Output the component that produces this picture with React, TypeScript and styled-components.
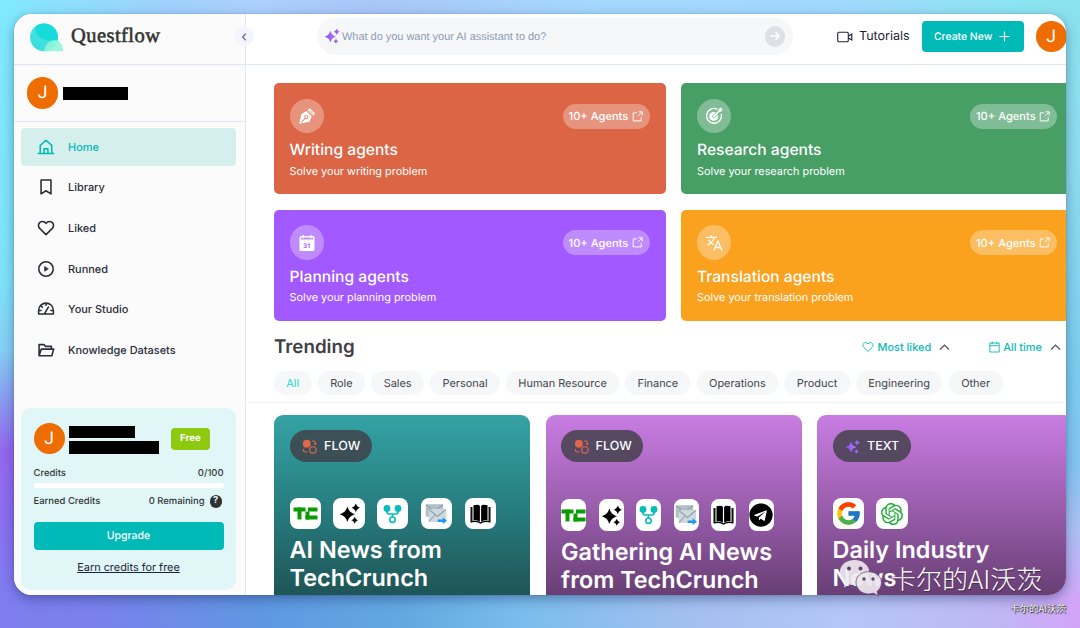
import React from "react";
import styled, { createGlobalStyle } from "styled-components";
import { FcGoogle } from "react-icons/fc";
import { SiOpenai } from "react-icons/si";
import { FaTelegram } from "react-icons/fa";

const Global = createGlobalStyle`
  * { box-sizing: border-box; }
  body {
    margin: 0;
    font-family: Inter, "Liberation Sans", sans-serif;
    font-optical-sizing: none;
    text-rendering: geometricPrecision;
    overflow: hidden;
  }
  button { text-rendering: inherit; font-optical-sizing: none; }
  svg { display: block; flex: none; }
`;

const Desktop = styled.div`
  position: relative;
  width: 1080px;
  height: 628px;
  padding: 14px;
  overflow: hidden;
  background:
    linear-gradient(90deg, #80e9fd 0, #a0d0fd 170px, #acd0fd 250px, #a9c6f8 370px, #a3d9fd 600px, #a2d8fd 830px, #8ce4f2 1010px, #8ae2ee 1080px) 0 0 / 100% 14px no-repeat,
    linear-gradient(90deg, #7f7df0 0, #7a80ec 90px, #5f97e2 260px, #62a8e0 400px, #79bdec 520px, #a3bff0 690px, #b4c6f5 850px, #c0b6f4 1000px, #d3a3f8 1080px) 0 594px / 100% 34px no-repeat,
    linear-gradient(180deg, #80e9fd 0, #80e2f9 280px, #85cff5 350px, #8a9cf0 400px, #9468ee 450px, #8d6df0 510px, #7f7df0 594px) 0 0 / 40px 594px no-repeat,
    linear-gradient(180deg, #8ae2ee 0, #8fdcee 160px, #7ccbee 380px, #86c4f0 470px, #adc0f5 530px, #cdaaf7 594px) 100% 0 / 40px 594px no-repeat,
    #7dbce9;
`;

const Window = styled.div`
  display: grid;
  grid-template-columns: 232px 1fr;
  width: 1052px;
  height: 580.6px;
  overflow: hidden;
  border-radius: 18px;
  background: #fff;
`;

const WindowShadow = styled.div`
  width: 1052px;
  border-radius: 18px;
  box-shadow: 0 0 1px rgba(0, 30, 60, 0.5), 0 4px 12px rgba(10, 30, 80, 0.38);
`;

const Sidebar = styled.aside`
  position: relative;
  display: flex;
  flex-direction: column;
  min-height: 0;
  background: #fbfbfb;
  border-right: 1px solid #e5e6f5;
`;

const Brand = styled.div`
  display: flex;
  align-items: center;
  height: 51px;
  padding: 0 0 4px 16px;
  border-bottom: 1px solid #e0e5f6;
`;

const BrandName = styled.span`
  margin: -1px 0 0 8px;
  font: 500 20.5px "Liberation Serif", serif;
  letter-spacing: 0.45px;
  color: #333;
  -webkit-text-stroke: 0.55px #333;
`;

const Collapse = styled.div`
  position: absolute;
  z-index: 2;
  top: 13px;
  right: -9px;
  display: grid;
  place-items: center;
  width: 19px;
  height: 19px;
  border-radius: 50%;
  background: #f4f5fc;
`;

const UserRow = styled.div`
  display: flex;
  align-items: center;
  gap: 5px;
  height: 57px;
  padding: 0 0 0 13px;
  border-bottom: 1px solid #e5e6f2;
`;

const Avatar = styled.div`
  display: grid;
  place-items: center;
  flex: none;
  width: 31.4px;
  height: 31.4px;
  padding-top: 1px;
  border-radius: 50%;
  background: #ef6c00;
  color: #fff;
  font: 400 17.5px Roboto, sans-serif;
`;

const Redacted = styled.div<{ $w: number; $h: number }>`
  width: ${(p) => p.$w}px;
  height: ${(p) => p.$h}px;
  background: #000;
`;

const Nav = styled.nav`
  display: flex;
  flex-direction: column;
  gap: 3.1px;
  padding: 6px 9px 0 7px;
`;

const NavItem = styled.a<{ $active?: boolean }>`
  display: flex;
  align-items: center;
  gap: 13px;
  height: 37.5px;
  padding-left: 16px;
  border-radius: 4px;
  font-size: 10.95px;
  font-weight: 500;
  color: ${(p) => (p.$active ? "#06b9b7" : "#2b2d38")};
  background: ${(p) => (p.$active ? "#d5efed" : "transparent")};
`;

const Plan = styled.section`
  display: flex;
  flex-direction: column;
  width: 215px;
  height: 182px;
  margin: auto 0 5px 7px;
  padding: 15px 12.5px 0;
  border-radius: 10px;
  background: #e1f6f7;
`;

const PlanUser = styled.div`
  display: flex;
  align-items: center;
  height: 32px;
`;

const Redactions = styled.div`
  display: flex;
  flex-direction: column;
  gap: 3px;
  width: 102px;
  padding: 3px 0 0 4px;
`;

const FreeTag = styled.span`
  width: 39px;
  margin-left: 4px;
  border-radius: 4px;
  background: #8cc90f;
  color: #fff;
  font-size: 9.6px;
  font-weight: 700;
  line-height: 22px;
  text-align: center;
`;

const PlanLine = styled.div<{ $top: number }>`
  display: flex;
  align-items: center;
  justify-content: space-between;
  height: 13px;
  margin-top: ${(p) => p.$top}px;
  font-size: 9.45px;
  font-weight: 500;
  color: #33373a;
`;

const Remaining = styled.span`
  display: flex;
  align-items: center;
  gap: 5px;
  padding-right: 1.5px;
`;

const Help = styled.span`
  width: 12.5px;
  border-radius: 50%;
  background: #2f3030;
  color: #e1f6f7;
  font-size: 9.5px;
  font-weight: 700;
  line-height: 12.5px;
  text-align: center;
`;

const Meter = styled.div`
  height: 4.5px;
  margin-top: 3px;
  border-radius: 3px;
  background: #fff;
`;

const Upgrade = styled.button`
  height: 28px;
  margin-top: 13.5px;
  padding: 0;
  border: 0;
  border-radius: 4px;
  background: #00bab7;
  color: #fff;
  font: 500 10.5px Inter, sans-serif;
`;

const EarnLink = styled.a`
  margin-top: 10px;
  color: #1b2437;
  font-size: 10.9px;
  line-height: 14px;
  text-align: center;
  text-decoration: underline;
`;

const Main = styled.main`
  min-width: 0;
  overflow: hidden;
`;

const TopBar = styled.header`
  display: flex;
  align-items: center;
  width: 840px;
  height: 51px;
  padding: 0 0 5.5px 71px;
  border-bottom: 1px solid #e0e7f8;
`;

const Search = styled.div`
  display: flex;
  align-items: center;
  width: 476px;
  height: 37.5px;
  padding: 0 8px 0 6.5px;
  border-radius: 19px;
  background: #f6f7f9;
`;

const Placeholder = styled.span`
  flex: 1;
  margin: 1px 0 0 2.5px;
  font-family: "Liberation Sans", sans-serif;
  font-size: 10.95px;
  color: #8b9cb3;
`;

const Go = styled.span`
  display: grid;
  place-items: center;
  width: 20.5px;
  height: 20.5px;
  border-radius: 50%;
  background: #dfe0e7;
`;

const Tutorials = styled.a`
  display: flex;
  align-items: center;
  gap: 6px;
  width: 85px;
  margin-left: 44px;
  padding-top: 1px;
  font-size: 12.5px;
  color: #1f2136;
`;

const Create = styled.button`
  display: flex;
  align-items: center;
  justify-content: space-between;
  width: 101.5px;
  height: 31.5px;
  margin-right: 12px;
  padding: 0 13.5px 0 12px;
  border: 0;
  border-radius: 4px;
  background: #00bab7;
  color: #fff;
  font: 500 10.4px Inter, sans-serif;
`;

const AgentGrid = styled.section`
  display: grid;
  grid-template-columns: 391.6px 391.6px;
  grid-auto-rows: 110.7px;
  gap: 15.8px;
  width: 799px;
  margin: 18.4px 0 0 28px;
`;

const AgentCard = styled.article<{ $color: string }>`
  display: flex;
  flex-direction: column;
  padding: 15.5px 15.6px 0;
  border-radius: 5px;
  background: ${(p) => p.$color};
  color: #fff;
`;

const AgentTop = styled.div`
  display: flex;
  align-items: center;
  justify-content: space-between;
`;

const AgentIcon = styled.div`
  display: grid;
  place-items: center;
  width: 34.4px;
  height: 34.4px;
  border-radius: 50%;
  background: rgba(255, 255, 255, 0.31);
`;

const AgentCount = styled.div`
  display: flex;
  align-items: center;
  justify-content: space-between;
  width: 87.4px;
  height: 25px;
  padding: 0 7.5px 0 6px;
  border-radius: 13px;
  background: rgba(255, 255, 255, 0.31);
  font-size: 11.1px;
  font-weight: 500;
`;

const AgentTitle = styled.h3`
  margin: 7px 0 0;
  font-size: 15.6px;
  font-weight: 500;
  line-height: 20px;
`;

const AgentText = styled.p`
  margin: 3.5px 0 0;
  font-size: 10.87px;
  line-height: 14px;
`;

const TrendHead = styled.div`
  display: flex;
  align-items: center;
  height: 30px;
  margin: 11.3px 0 0 28px;
`;

const TrendTitle = styled.h2`
  width: 588px;
  margin: 0;
  font-size: 18.75px;
  font-weight: 600;
  color: #3f4046;
`;

const Filter = styled.div<{ $gap: number }>`
  display: flex;
  align-items: center;
  gap: 3.5px;
  margin-right: ${(p) => p.$gap}px;
  font-size: 10.95px;
  font-weight: 500;
  color: #0cbab8;
  white-space: nowrap;
`;

const Chevron = styled.svg`
  margin-left: 4px;
`;

const Chips = styled.div`
  display: flex;
  gap: 6.3px;
  height: 41px;
  padding: 9px 0 0 28px;
  border-bottom: 1px solid #eeeff1;
`;

const Chip = styled.span<{ $w: number; $active?: boolean }>`
  flex: none;
  width: ${(p) => p.$w}px;
  height: 24.4px;
  border-radius: 12.5px;
  background: #f6f7f9;
  color: ${(p) => (p.$active ? "#14dcd2" : "#42444a")};
  font-size: 10.95px;
  line-height: 24.4px;
  text-align: center;
`;

const Trends = styled.section`
  display: grid;
  grid-template-columns: repeat(3, 256px);
  gap: 15.5px;
  width: 799px;
  margin: 12px 0 0 28px;
`;

const TrendCard = styled.article<{ $from: string; $mid: string; $to: string }>`
  display: flex;
  flex-direction: column;
  height: 260px;
  padding: 15.5px 15.6px 0;
  border-radius: 9px;
  background: linear-gradient(180deg, ${(p) => p.$from} 0, ${(p) => p.$mid} 90px, ${(p) => p.$to} 180px);
  color: #fff;
`;

const Kind = styled.div<{ $w: number }>`
  display: flex;
  align-items: center;
  gap: 7px;
  width: ${(p) => p.$w}px;
  height: 31.3px;
  padding-left: 12.5px;
  border-radius: 16px;
  background: rgba(64, 64, 72, 0.82);
  font-size: 12.5px;
  font-weight: 500;
`;

const Tools = styled.div<{ $top: number }>`
  display: flex;
  gap: 12.5px;
  margin-top: ${(p) => p.$top}px;
`;

const Tool = styled.div<{ $w: number }>`
  display: grid;
  place-items: center;
  width: ${(p) => p.$w}px;
  height: 31.3px;
  border-radius: 8px;
  background: #fff;
`;

const TrendName = styled.h3`
  margin: 7px -8px 0 0;
  font-size: 23.4px;
  font-weight: 600;
  line-height: 28px;
`;

const Watermark = styled.div`
  position: absolute;
  z-index: 3;
  left: 839px;
  top: 558px;
  display: flex;
  align-items: center;
  gap: 8px;
  height: 40px;
  color: #fff;
  font: 300 26px "Noto Sans CJK SC", sans-serif;
  text-shadow: 0.5px 0.5px 1px rgba(0, 0, 0, 0.45);
  white-space: nowrap;
`;

const Signature = styled.div`
  position: absolute;
  right: 14px;
  top: 601px;
  color: #fff;
  font: 400 9.5px/14px "Noto Sans CJK SC", sans-serif;
  text-shadow: 1px 1px 1px #222, 0 0 1px #333;
`;

const Line = ({ children, s = 20 }: { children: React.ReactNode; s?: number }) => (
  <svg width={s} height={s} viewBox="0 0 20 20" fill="none" stroke="currentColor" strokeWidth="1.75" strokeLinejoin="round" strokeLinecap="round">
    {children}
  </svg>
);

const Logo = () => (
  <svg width="33" height="29" viewBox="0 0 33 29">
    <defs>
      <linearGradient id="lg" x1="0" y1="1" x2="1" y2="0">
        <stop offset="0" stopColor="#37dce0" />
        <stop offset="1" stopColor="#4de8da" />
      </linearGradient>
      <clipPath id="lc"><circle cx="14" cy="14.3" r="13.9" /></clipPath>
    </defs>
    <circle cx="14" cy="14.3" r="13.9" fill="url(#lg)" />
    <path d="M6 -1H30V17.5H19C11 17.5 5 12 5.500 5Z" fill="#17dbdb" clipPath="url(#lc)" />
    <path d="M14 28.300C15 21 20 17.300 25 17.300C30 17.300 33 22 33 28.300Z" fill="#8ff5dc" opacity=".9" />
  </svg>
);

const Sparkles = ({ s = 16, fill = "url(#spark)" }: { s?: number; fill?: string }) => (
  <svg width={s} height={s} viewBox="0 0 20 20">
    <defs>
      <linearGradient id="spark" x1="0" y1="0" x2="1" y2="0">
        <stop offset="0" stopColor="#7d52f4" />
        <stop offset="1" stopColor="#b57bf5" />
      </linearGradient>
    </defs>
    <g fill={fill}>
      <path d="M8 3.300C9.500 7.700 11 9.200 15.300 10.700C11 12.200 9.500 13.700 8 18.100C6.500 13.700 5 12.200 0.500 10.700C5 9.200 6.500 7.700 8 3.300Z" />
      <path d="M16 0.500C16.900 2.900 17.700 3.700 20 4.600C17.700 5.500 16.900 6.300 16 8.700C15.100 6.300 14.300 5.500 12 4.600C14.300 3.700 15.100 2.900 16 0.500Z" />
      <path d="M15 13.200C15.700 15.100 16.400 15.800 18.300 16.500C16.400 17.200 15.700 17.900 15 19.800C14.300 17.900 13.600 17.200 11.700 16.500C13.600 15.800 14.300 15.100 15 13.200Z" />
    </g>
  </svg>
);

const navItems: [string, React.ReactNode][] = [
  ["Home", <path d="M1.500 17.300H18.500M3.600 17V8.200L10 2.500L16.400 8.200V17M7.900 17V12H12.100V17" />],
  ["Library", <path d="M4.500 2.300H15.500V17.700L10 14.200L4.500 17.700Z" />],
  ["Liked", <path d="M10 17.300L3.200 10.700C0 7.300 2.200 2.700 6 2.700C8 2.700 9.300 3.700 10 5C10.700 3.700 12 2.700 14 2.700C17.800 2.700 20 7.300 16.800 10.700Z" />],
  ["Runned", <><circle cx="10" cy="10" r="8" /><path d="M8.500 7.600V12.400L12.300 10Z" fill="currentColor" strokeWidth=".8" /></>],
  ["Your Studio", <path d="M1.800 15.600V12C1.800 0.600 18.200 0.600 18.200 12V15.600ZM8.300 15.300L12.600 7.800M10 3.800V5.800M4.800 6.800L6 8M2.500 11.700H4.500M15.500 11.700H17.500" />],
  ["Knowledge Datasets", <path d="M2.300 16.300V4H7.800L9.500 6H16V8.800M2.300 16.300L4.800 9H18.500L16.500 16.300Z" />],
];

const external = (
  <svg width="11" height="11" viewBox="0 0 11 11" fill="none" stroke="#fff" strokeWidth=".95">
    <path d="M5 1.900H1.200V9.900H9.200V6.200M6.600 .8H10.200V4.400M10 1L5.700 5.300" />
  </svg>
);

const pen = (
  <svg width="18" height="18" viewBox="0 0 18 18" fill="#fff">
    <path fillRule="evenodd" d="M1.300 16.700L3.200 7.200L8.500 4.100L13.700 9.400L11.300 14.700ZM2.800 14.900L6.500 11.200A2.100 2.100 0 1 1 7.400 12L3.600 15.700Z" />
    <circle cx="8.200" cy="10" r="1" />
    <path d="M9.600 3.300L11.800 1.200L17 6.500L14.800 8.600ZM11.300 3.400L14.700 7L15.300 6.400L11.900 2.900Z" fillRule="evenodd" />
  </svg>
);

const target = (
  <svg width="18" height="18" viewBox="0 0 18 18" fill="none" stroke="#fff">
    <path strokeWidth="1.400" d="M12.500 2.300A7.400 7.400 0 1 0 16.200 7" />
    <circle cx="8.700" cy="9.400" r="4.500" fill="#fff" stroke="none" />
    <path stroke="#83bc96" strokeWidth="1" d="M7.600 9.100L12.700 4M9.600 10.600L14.200 6M7.400 9.200Q7.600 10.900 9.400 10.800" />
    <path strokeWidth="1.400" d="M8.800 9.500L15 3.300" />
    <path strokeWidth=".8" d="M14 4V2.200L16.400 .9V2.700L17.300 3L15.500 4.500Z" fill="#fff" />
  </svg>
);

const CalendarSvg = styled.svg`
  font: 700 6.6px Roboto, sans-serif;
`;

const calendar = (
  <CalendarSvg width="18" height="18" viewBox="0 0 18 18" fill="#fff">
    <path fillRule="evenodd" d="M3 2H4.500V1H5.900V2H12.100V1H13.500V2H15Q16.500 2 16.500 3.500V15.500Q16.500 17 15 17H3Q1.500 17 1.500 15.500V3.500Q1.500 2 3 2ZM3 3.400V5.500H15V3.400H13.500V4.300H12.100V3.400H5.900V4.300H4.500V3.400Z" />
    <text x="9" y="13.700" textAnchor="middle" fill="#a259ff">31</text>
  </CalendarSvg>
);

const translate = (
  <svg width="18" height="18" viewBox="0 0 18 18" fill="none" stroke="#fff" strokeWidth="1.300">
    <path d="M1 3.300H11.700M6.300 1.300V3.300M2.300 11.200C6.500 9 8.700 6 9 3.500M3.500 5.700C4.700 8 6.400 9.500 8.500 10.600M8.800 16.500L12.900 7.200L17 16.500M10.300 13.500H15.500" />
  </svg>
);

const agents = [
  { name: "Writing agents", text: "Solve your writing problem", color: "#dc6545", icon: pen },
  { name: "Research agents", text: "Solve your research problem", color: "#479f66", icon: target },
  { name: "Planning agents", text: "Solve your planning problem", color: "#a259ff", icon: calendar },
  { name: "Translation agents", text: "Solve your translation problem", color: "#faa11d", icon: translate },
];

const chips: [string, number][] = [
  ["All", 37.5], ["Role", 47.2], ["Sales", 52.7], ["Personal", 69.6], ["Human Resource", 112.8],
  ["Finance", 65.2], ["Operations", 81.3], ["Product", 65.4], ["Engineering", 86.3], ["Other", 54],
];

const UpChevron = () => (
  <Chevron width="11" height="8" viewBox="0 0 11 8" fill="none" stroke="#4c4e57" strokeWidth="1.100">
    <path d="M1 6.500L5.500 2L10 6.500" />
  </Chevron>
);

const flowIcon = (
  <svg width="15" height="15" viewBox="0 0 15 15" fill="none" stroke="#e0684a" strokeWidth="1.100">
    <circle cx="4.800" cy="4.700" r="3.900" fill="#e0684a" stroke="none" />
    <circle cx="10.900" cy="10.900" r="3.200" />
    <path d="M9.800 2H11.500Q13.300 2 13.300 3.800V5.500M1.500 10V11.300Q1.500 13 3.200 13H5.500M12.300 4.500L13.300 5.600L14.300 4.500" />
  </svg>
);

const techcrunch = (
  <svg width="25" height="13" viewBox="0 0 25 13" fill="#0a9b05">
    <rect x=".5" y=".5" width="12" height="4" /><rect x="4.500" y=".5" width="4" height="12" />
    <rect x="16.500" y=".5" width="8" height="4" /><rect x="12.500" y="4.500" width="4" height="8" />
    <rect x="12.500" y="8.500" width="12" height="4" /><rect x="15" y=".5" width="2" height="4" />
  </svg>
);

const fork = (
  <svg width="19" height="20" viewBox="0 0 19 20" fill="none" stroke="#05bdb9" strokeWidth="1.600">
    <circle cx="4" cy="4.400" r="3.400" fill="#05bdb9" stroke="none" />
    <circle cx="15" cy="4.400" r="3.400" fill="#05bdb9" stroke="none" />
    <path d="M4 6V8Q4 10 6 10H13Q15 10 15 8V6M9.500 10V13" />
    <circle cx="9.500" cy="15.700" r="2.700" />
  </svg>
);

const mail = (
  <svg width="23" height="22" viewBox="0 0 23 22">
    <rect x=".7" y="1.200" width="17.500" height="12.500" rx="1" fill="#b1bfc7" />
    <path d="M1 1.700L9.500 8L18 1.700" stroke="#859aa5" fill="none" />
    <rect x="3.600" y="6" width="17.600" height="13" rx="1" fill="#cfd8dd" />
    <path d="M4 6.500L12.400 13.500L20.800 6.500M4 18.500L9.800 12" stroke="#8fa3ae" strokeWidth="1.100" fill="none" />
    <path d="M12.700 16.400H17.700V14.300L22 17.700L17.700 21V19H12.700Z" fill="#2196f3" />
  </svg>
);

const book = (
  <svg width="21" height="20" viewBox="0 0 21 20">
    <path d="M3.500 1.300Q8.500 -.3 9.900 2V17.800Q7.500 15.500 3.500 16.500ZM17.500 1.300Q12.500 -.3 11.100 2V17.800Q13.500 15.500 17.500 16.500Z" fill="#000" />
    <path d="M1.800 3V17.700Q7.500 16.500 10.500 19Q13.500 16.500 19.200 17.700V3" fill="none" stroke="#000" strokeWidth="1.300" />
    <path d="M.5 3H1.500V18.500H.5ZM19.500 3H20.500V18.500H19.500Z" fill="#000" />
  </svg>
);

const wechat = (
  <svg width="43" height="40" viewBox="0 0 43 40">
    <path d="M15.500 2C7 2 .8 7.300.8 14.500C.8 18.700 3 22 6.200 24.300L5 29.500L10.300 26.600C12 27.100 13.800 27.300 15.500 27.300C24 27.300 30.300 21.500 30.300 14.500S24 2 15.500 2Z" fill="#eeeaf0" opacity=".9" />
    <path d="M29.500 13.700C22.300 13.700 17 18.500 17 24.500S22.300 36 29.500 36C31.200 36 33 35.700 34.500 35.200L39.500 38L38 33.600C40.900 31.500 42.500 28.300 42.500 24.500C42.500 18.500 36.700 13.700 29.500 13.700Z" fill="#ebe7ed" stroke="#65436e" strokeWidth=".8" opacity=".92" />
    <g fill="#63446e">
      <circle cx="10" cy="10.500" r="2" /><circle cx="21.500" cy="10.500" r="2" />
      <circle cx="25" cy="21" r="1.700" /><circle cx="34" cy="21" r="1.700" />
    </g>
  </svg>
);

const base = [techcrunch, <Sparkles s={21} fill="#000" />, fork, mail, book];
const trends = [
  { kind: "FLOW", w: 82, title: ["AI News from", "TechCrunch"], tile: 31.3, top: 36.3, colors: ["#35a3a5", "#277e80", "#1f5557"], tools: base },
  { kind: "FLOW", w: 82, title: ["Gathering AI News", "from TechCrunch"], tile: 25, top: 37.8, colors: ["#c87de2", "#9b5eae", "#683f75"], tools: [...base, <FaTelegram size={24} color="#000" />] },
  { kind: "TEXT", w: 78.5, title: ["Daily Industry", "News"], tile: 31.3, top: 36.3, colors: ["#c87de2", "#9b5eae", "#683f75"], tools: [<FcGoogle size={27} />, <SiOpenai size={22} color="#20ac39" />] },
];

export default function App() {
  return (
    <Desktop>
      <Global />
      <WindowShadow>
        <Window>
          <Sidebar>
            <Collapse>
              <svg width="9" height="10" viewBox="0 0 9 10" fill="none" stroke="#6a70a8" strokeWidth="1.300"><path d="M5.800 1.800L2.600 5L5.800 8.200" /></svg>
            </Collapse>
            <Brand><Logo /><BrandName>Questflow</BrandName></Brand>
            <UserRow><Avatar>J</Avatar><Redacted $w={65} $h={13} /></UserRow>
            <Nav>
              {navItems.map(([label, icon], i) => (
                <NavItem key={label} $active={i === 0}><Line s={18}>{icon}</Line>{label}</NavItem>
              ))}
            </Nav>
            <Plan>
              <PlanUser>
                <Avatar>J</Avatar>
                <Redactions><Redacted $w={66} $h={12.500} /><Redacted $w={90} $h={13} /></Redactions>
                <FreeTag>Free</FreeTag>
              </PlanUser>
              <PlanLine $top={12.500}><span>Credits</span><span>0/100</span></PlanLine>
              <Meter />
              <PlanLine $top={7.500}><span>Earned Credits</span><Remaining>0 Remaining<Help>?</Help></Remaining></PlanLine>
              <Upgrade>Upgrade</Upgrade>
              <EarnLink>Earn credits for free</EarnLink>
            </Plan>
          </Sidebar>
          <Main>
            <TopBar>
              <Search>
                <Sparkles s={16} />
                <Placeholder>What do you want your AI assistant to do?</Placeholder>
                <Go><svg width="12" height="12" viewBox="0 0 12 12" fill="none" stroke="#fff" strokeWidth="1.500"><path d="M1.500 6H10M6.500 2.300L10.200 6L6.500 9.700" /></svg></Go>
              </Search>
              <Tutorials>
                <svg width="16" height="12" viewBox="0 0 16 12" fill="none" stroke="currentColor" strokeWidth="1.100"><rect x=".7" y="1.200" width="10.600" height="9.500" rx="1.300" /><path d="M11.500 5L14.800 3V9L11.500 7" /></svg>
                Tutorials
              </Tutorials>
              <Create>Create New<svg width="11" height="11" viewBox="0 0 11 11" stroke="#fff" strokeWidth="1.200"><path d="M5.500 .5V10.500M.5 5.500H10.500" /></svg></Create>
              <Avatar>J</Avatar>
            </TopBar>
            <AgentGrid>
              {agents.map((a) => (
                <AgentCard key={a.name} $color={a.color}>
                  <AgentTop><AgentIcon>{a.icon}</AgentIcon><AgentCount>10+ Agents{external}</AgentCount></AgentTop>
                  <AgentTitle>{a.name}</AgentTitle>
                  <AgentText>{a.text}</AgentText>
                </AgentCard>
              ))}
            </AgentGrid>
            <TrendHead>
              <TrendTitle>Trending</TrendTitle>
              <Filter $gap={39}>
                <svg width="12" height="12" viewBox="0 0 20 20" fill="none" stroke="currentColor" strokeWidth="1.500">{navItems[2][1]}</svg>
                Most liked<UpChevron />
              </Filter>
              <Filter $gap={0}>
                <svg width="11" height="12" viewBox="0 0 11 12" fill="none" stroke="currentColor" strokeWidth=".9"><path d="M.8 2H10.200V11H.8ZM.8 4.700H10.200M3.300 .7V3M7.700 .7V3" /></svg>
                All time<UpChevron />
              </Filter>
            </TrendHead>
            <Chips>
              {chips.map(([label, w], i) => <Chip key={label} $w={w} $active={i === 0}>{label}</Chip>)}
            </Chips>
            <Trends>
              {trends.map((t) => (
                <TrendCard key={t.title[0]} $from={t.colors[0]} $mid={t.colors[1]} $to={t.colors[2]}>
                  <Kind $w={t.w}>{t.kind === "FLOW" ? flowIcon : <Sparkles s={15} />}{t.kind}</Kind>
                  <Tools $top={t.top}>
                    {t.tools.map((tool, i) => <Tool key={i} $w={t.tile}>{tool}</Tool>)}
                  </Tools>
                  <TrendName>{t.title[0]}<br />{t.title[1]}</TrendName>
                </TrendCard>
              ))}
            </Trends>
          </Main>
        </Window>
      </WindowShadow>
      <Watermark>{wechat}<span>卡尔的AI沃茨</span></Watermark>
      <Signature>卡尔的AI沃茨</Signature>
    </Desktop>
  );
}
